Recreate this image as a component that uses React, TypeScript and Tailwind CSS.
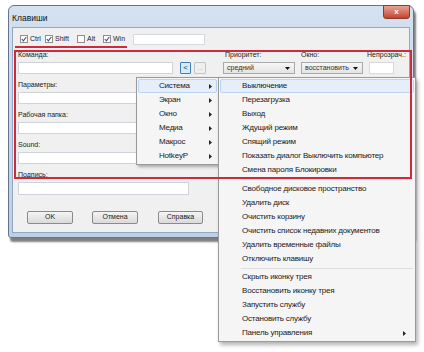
import React from 'react';

const sysItems = ['Система', 'Экран', 'Окно', 'Медиа', 'Макрос', 'HotkeyP'];

const actionGroups = [
  ['Выключение', 'Перезагрузка', 'Выход', 'Ждущий режим', 'Спящий режим', 'Показать диалог Выключить компьютер', 'Смена пароля Блокировки'],
  ['Свободное дисковое пространство', 'Удалить диск', 'Очистить корзину', 'Очистить список недавних документов', 'Удалить временные файлы', 'Отключить клавишу'],
  ['Скрыть иконку трея', 'Восстановить иконку трея', 'Запустить службу', 'Остановить службу', 'Панель управления'],
];

const Arrow = () => (
  <svg width="3" height="5" viewBox="0 0 3 5" className="shrink-0">
    <polygon points="0,0 3,2.5 0,5" fill="#222" />
  </svg>
);

const Check = ({ on }: { on: boolean }) => (
  <span className="w-[8px] h-[8px] border border-[#8f8f8f] bg-white flex items-center justify-center shrink-0">
    {on && (
      <svg width="6" height="6" viewBox="0 0 6 6">
        <path d="M0.8 3 L2.4 4.8 L5.3 1" stroke="#3d4f7a" strokeWidth="1.1" fill="none" />
      </svg>
    )}
  </span>
);

const Field = ({ label, w = 155, h = 12 }: { label: string; w?: number; h?: number }) => (
  <div className="flex flex-col">
    <div className="h-[14px] leading-[14px] text-[7px] text-[#222]">{label}</div>
    <div className="bg-white border border-[#cfd4da]" style={{ width: w, height: h }} />
  </div>
);

const Select = ({ value, w }: { value: string; w: number }) => (
  <div
    className="h-[12px] flex items-center justify-between pl-[3px] pr-[4px] border border-[#a9a9a9] bg-gradient-to-b from-[#f7f7f7] to-[#e3e3e3] text-[7px] text-[#333]"
    style={{ width: w }}
  >
    <span>{value}</span>
    <svg width="5" height="3" viewBox="0 0 5 3">
      <polygon points="0,0 5,0 2.5,3" fill="#111" />
    </svg>
  </div>
);

const Btn = ({ label, w }: { label: string; w: number }) => (
  <div
    className="h-[13px] flex items-center justify-center rounded-[2px] border border-[#8a8a8a] bg-gradient-to-b from-[#f4f4f4] to-[#dadada] text-[7px] text-[#222]"
    style={{ width: w }}
  >
    {label}
  </div>
);

export default function App() {
  return (
    <div className="relative w-[424px] h-[352px] bg-white overflow-hidden font-['Liberation_Sans',Arial,sans-serif]">
      {/* dialog window */}
      <div className="pt-[5px] pl-[8px]">
        <div className="w-[406px] h-[233px] rounded-t-[6px] rounded-b-[3px] border border-[#62758b] bg-gradient-to-b from-[#d3e1f0] to-[#bcd0e8] shadow-[2px_4px_2px_rgba(0,0,0,0.5)] px-[3px] pb-[4px] flex flex-col">
          <div className="h-[21px] flex justify-between">
            <span className="text-[8.5px] text-[#111] pt-[6px]">Клавиши</span>
            <div className="-mt-[1px] w-[27px] h-[14px] rounded-b-[3px] border border-[#8b3a30] bg-gradient-to-b from-[#e9a293] to-[#c2432f] flex items-center justify-center text-white text-[8px] font-bold">
              x
            </div>
          </div>
          <div className="flex-1 bg-[#f0f0f0] border border-[#93a8c0]">
            {/* modifier row */}
            <div className="h-[12px] mt-[5px] flex items-center text-[7px] text-[#222]">
              <div className="w-[32px] pl-[7px] flex items-center gap-[2px]"><Check on /> <span>Ctrl</span></div>
              <div className="w-[32px] flex items-center gap-[2px]"><Check on /> <span>Shift</span></div>
              <div className="w-[26px] flex items-center gap-[2px]"><Check on={false} /> <span>Alt</span></div>
              <div className="w-[30px] flex items-center gap-[2px]"><Check on /> <span>Win</span></div>
              <div className="w-[72px] h-[11px] bg-white border border-[#d6dadf]" />
            </div>

            {/* command row */}
            <div className="mt-[3px] pl-[5px] flex items-end">
              <Field label="Команда:" />
              <div className="ml-[7px] w-[11px] h-[12px] border border-[#3d7fb5] bg-[#d7eaf9] rounded-[1px] flex items-center justify-center text-[8px] text-[#1a3c5e]">&lt;</div>
              <div className="ml-[3px] w-[12px] h-[12px] border border-[#c2c2c2] bg-[#f0f0f0] rounded-[1px] flex items-center justify-center text-[6px] text-[#888] leading-none">...</div>
              <div className="ml-[17px] flex flex-col">
                <div className="h-[14px] leading-[14px] text-[7px] text-[#222] pl-[2px]">Приоритет:</div>
                <Select value="средний" w={72} />
              </div>
              <div className="ml-[6px] flex flex-col">
                <div className="h-[14px] leading-[14px] text-[7px] text-[#222]">Окно:</div>
                <Select value="восстановить" w={62} />
              </div>
              <div className="ml-[6px] flex flex-col">
                <div className="h-[14px] leading-[14px] text-[7px] text-[#222] -ml-[2px]">Непрозрач.:</div>
                <div className="w-[25px] h-[12px] bg-white border border-[#d6dadf]" />
              </div>
            </div>

            <div className="pl-[5px] mt-[4px] flex flex-col gap-[4px]">
              <Field label="Параметры:" />
              <Field label="Рабочая папка:" />
              <Field label="Sound:" />
              <Field label="Подпись:" w={171} h={13} />
            </div>

            <div className="mt-[16px] pl-[14px] flex">
              <Btn label="OK" w={46} />
              <div className="ml-[19px]"><Btn label="Отмена" w={46} /></div>
              <div className="ml-[20px]"><Btn label="Справка" w={45} /></div>
            </div>
          </div>
        </div>
      </div>

      {/* category menu */}
      <div className="absolute left-[136px] top-[77px] w-[83px] py-[1px] border border-[#9a9a9a] bg-[#f5f5f5] shadow-[2px_2px_3px_rgba(0,0,0,0.3)] text-[8px] tracking-[-0.2px] text-[#1a1a1a]">
        {sysItems.map((t, i) => (
          <div
            key={t}
            className={
              'h-[14px] mx-[1px] pl-[20px] pr-[4px] flex items-center justify-between rounded-[2px] border ' +
              (i === 0 ? 'bg-[#e6eef9] border-[#bcd5f3]' : 'border-transparent')
            }
          >
            <span>{t}</span>
            <Arrow />
          </div>
        ))}
      </div>

      {/* action menu */}
      <div className="absolute left-[218px] top-[77px] w-[198px] py-[1px] border border-[#9a9a9a] bg-[#f5f5f5] shadow-[2px_3px_4px_rgba(0,0,0,0.3)] text-[8px] tracking-[-0.2px] text-[#1a1a1a]">
        {actionGroups.map((g, gi) => (
          <div key={gi}>
            {gi > 0 && (
              <div className={(gi === 1 ? 'h-[5px]' : 'h-[4px]') + ' flex items-center ml-[22px] mr-[2px]'}>
                <div className="w-full h-[1px] bg-[#dedede]" />
              </div>
            )}
            {g.map((t, i) => (
              <div
                key={t}
                className={
                  'h-[14px] mx-[1px] pl-[21px] pr-[7px] flex items-center justify-between rounded-[2px] border ' +
                  (gi === 0 && i === 0 ? 'bg-[#e6eef9] border-[#bcd5f3]' : 'border-transparent')
                }
              >
                <span>{t}</span>
                {t === 'Панель управления' && <Arrow />}
              </div>
            ))}
          </div>
        ))}
      </div>

      {/* red highlight annotations */}
      <div className="absolute left-[15px] top-[46px] w-[112px] h-[2px] bg-[#cc2a3d]" />
      <div className="absolute left-[14px] top-[50px] w-[398px] h-[129px] border-2 border-[#cc2a3d]" />
    </div>
  );
}
